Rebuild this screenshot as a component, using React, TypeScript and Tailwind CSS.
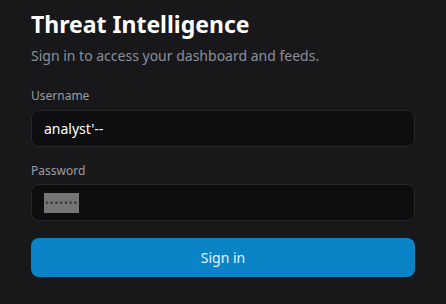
export default function App() {
  return (
    <div className="min-h-[304px] w-full bg-[#18181b] px-[31px] pt-[8px] font-['Noto_Sans',sans-serif]">
      <h1 className="text-[23px] font-bold leading-[32px] text-white">Threat Intelligence</h1>
      <p className="mt-[6px] text-[14px] leading-[20px] text-[#8b8f99]">
        Sign in to access your dashboard and feeds.
      </p>

      <form className="mt-[22px] flex flex-col" onSubmit={(e) => e.preventDefault()}>
        <label className="text-[12px] leading-[16px] text-[#9a9ca3]">Username</label>
        <input
          type="text"
          defaultValue="analyst'--"
          className="mt-[6px] h-[37px] w-full rounded-[8px] border border-[#27272a] bg-[#0e0e10] px-[12px] text-[14px] text-white outline-none"
        />

        <label className="mt-[16px] text-[12px] leading-[16px] text-[#9a9ca3]">Password</label>
        <div className="mt-[5px] flex h-[37px] w-full items-center rounded-[8px] border border-[#27272a] bg-[#0e0e10] px-[12px]">
          <span className="bg-[#757575] px-[1px] text-[10px] leading-[20px] tracking-[1px] text-[#3a3a3a]">
            •••••••
          </span>
        </div>

        <button
          type="submit"
          className="mt-[17px] h-[39px] w-full rounded-[8px] bg-[#0a84c6] text-[14px] text-[#e6f4fb]"
        >
          Sign in
        </button>
      </form>
    </div>
  );
}
